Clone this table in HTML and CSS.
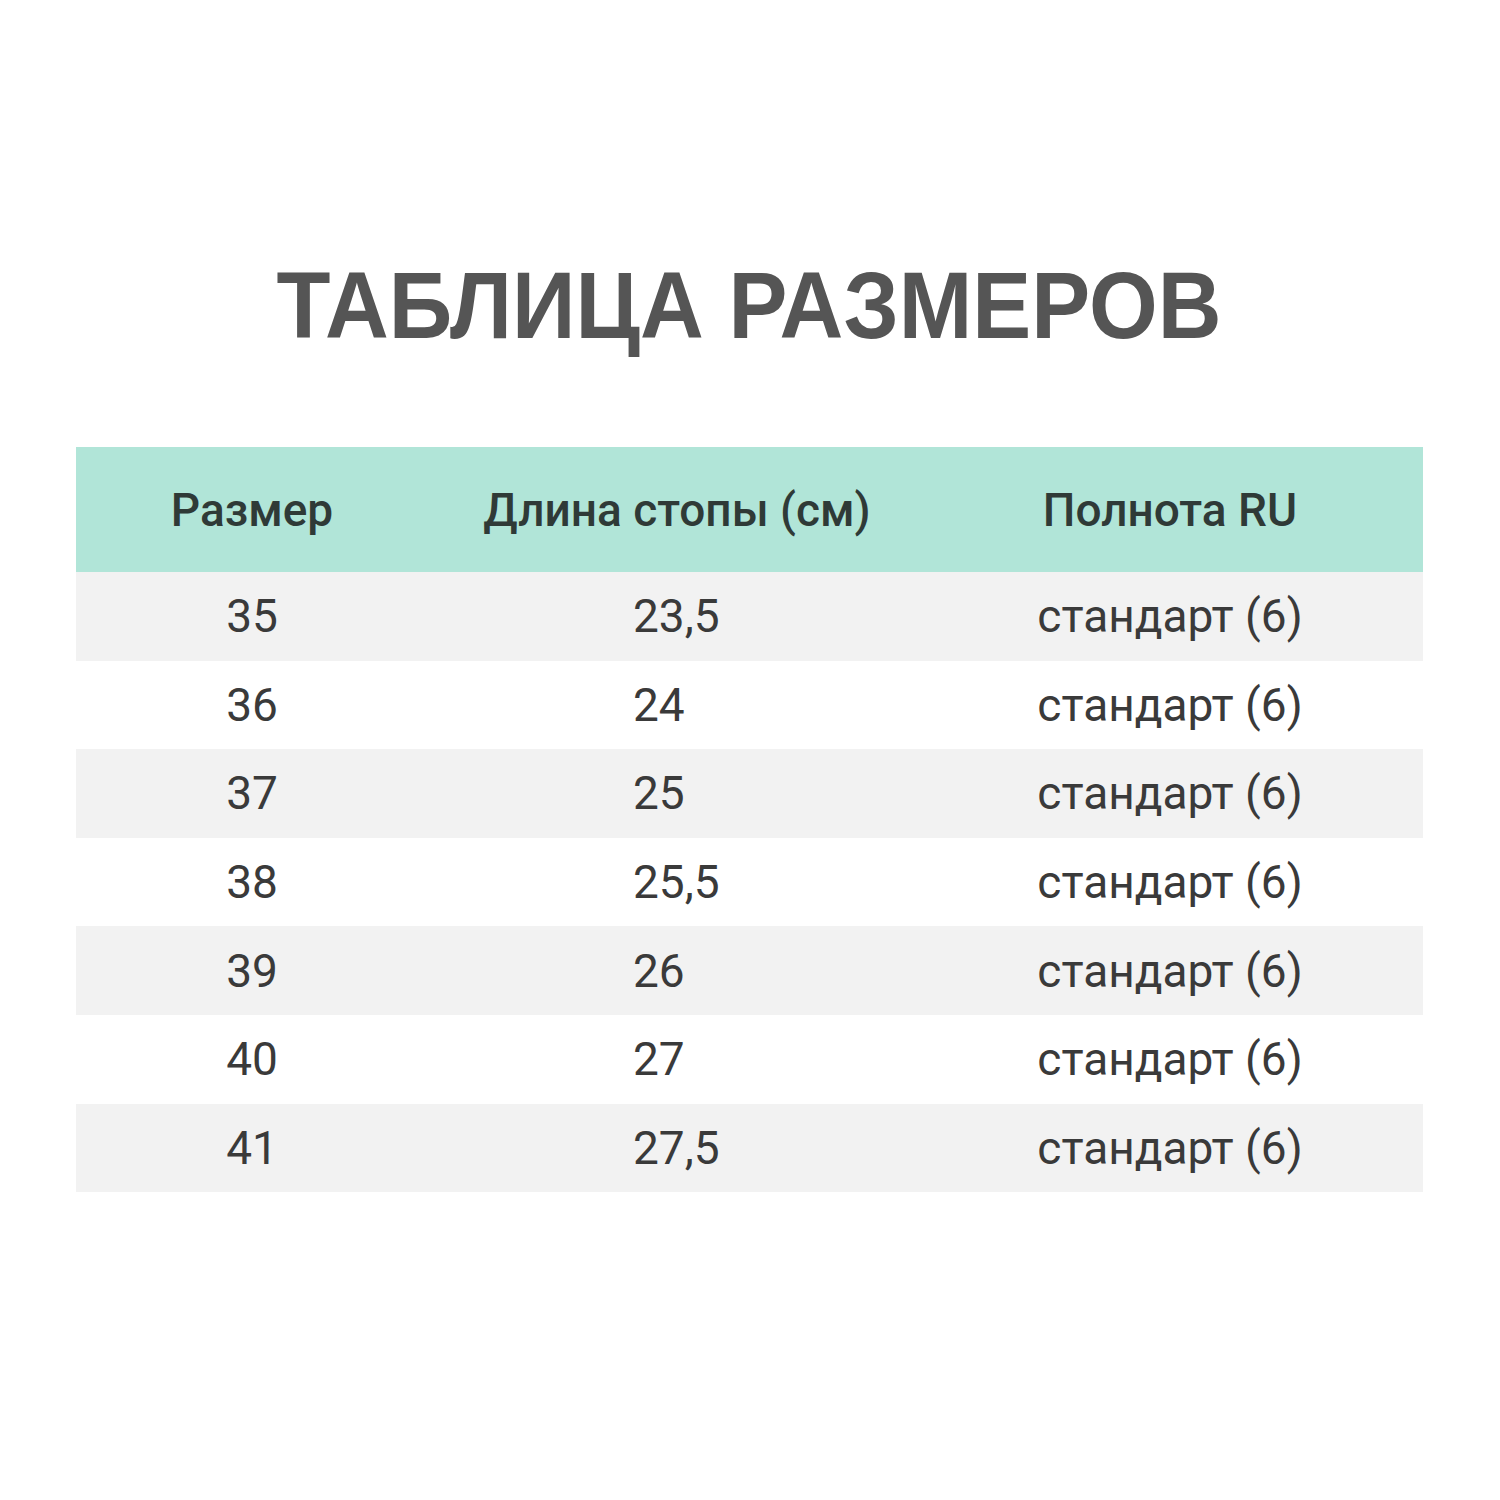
FILE: index.html
```html
<!DOCTYPE html>
<html lang="ru">
<head>
<meta charset="utf-8">
<link rel="stylesheet" href="styles.css">
</head>
<body>
<main class="page">
  <h1 class="title"><span class="title-text">ТАБЛИЦА РАЗМЕРОВ</span></h1>
  <div class="table">
    <div class="row head">
      <div class="c1">Размер</div>
      <div class="c2">Длина стопы (см)</div>
      <div class="c3">Полнота RU</div>
    </div>
    <div class="row odd"><div class="c1">35</div><div class="c2 val">23,5</div><div class="c3">стандарт (6)</div></div>
    <div class="row"><div class="c1">36</div><div class="c2 val">24</div><div class="c3">стандарт (6)</div></div>
    <div class="row odd"><div class="c1">37</div><div class="c2 val">25</div><div class="c3">стандарт (6)</div></div>
    <div class="row"><div class="c1">38</div><div class="c2 val">25,5</div><div class="c3">стандарт (6)</div></div>
    <div class="row odd"><div class="c1">39</div><div class="c2 val">26</div><div class="c3">стандарт (6)</div></div>
    <div class="row"><div class="c1">40</div><div class="c2 val">27</div><div class="c3">стандарт (6)</div></div>
    <div class="row odd"><div class="c1">41</div><div class="c2 val">27,5</div><div class="c3">стандарт (6)</div></div>
  </div>
</main>
</body>
</html>
```

FILE: styles.css
```css
html, body {
  margin: 0;
  padding: 0;
  background: #ffffff;
}
.page {
  width: 1500px;
  height: 1500px;
  box-sizing: border-box;
  padding: 250px 77px 0 76px;
}
.title {
  margin: 0;
  height: 197px;
  font-family: "Liberation Sans", Arial, sans-serif;
  font-weight: 700;
  font-size: 95px;
  line-height: 110px;
  text-align: center;
  color: #555555;
}
.title-text {
  display: inline-block;
  transform: scaleX(0.93);
}
.table {
  width: 1347px;
  font-family: Roboto, "Liberation Sans", sans-serif;
}
.row {
  display: grid;
  grid-template-columns: 352px 498px 1fr;
  align-items: center;
  height: 88.6px;
  font-size: 46px;
  color: #3a3a3a;
  background: #ffffff;
}
.row.odd {
  background: #f2f2f2;
}
.row.head {
  height: 125px;
  background: #b1e5d8;
  color: #2f3a37;
  font-weight: 500;
}
.c1 {
  text-align: center;
}
.c2 {
  text-align: center;
}
.c2.val {
  text-align: left;
  padding-left: 205px;
}
.c3 {
  text-align: center;
  padding-right: 9px;
}
```
